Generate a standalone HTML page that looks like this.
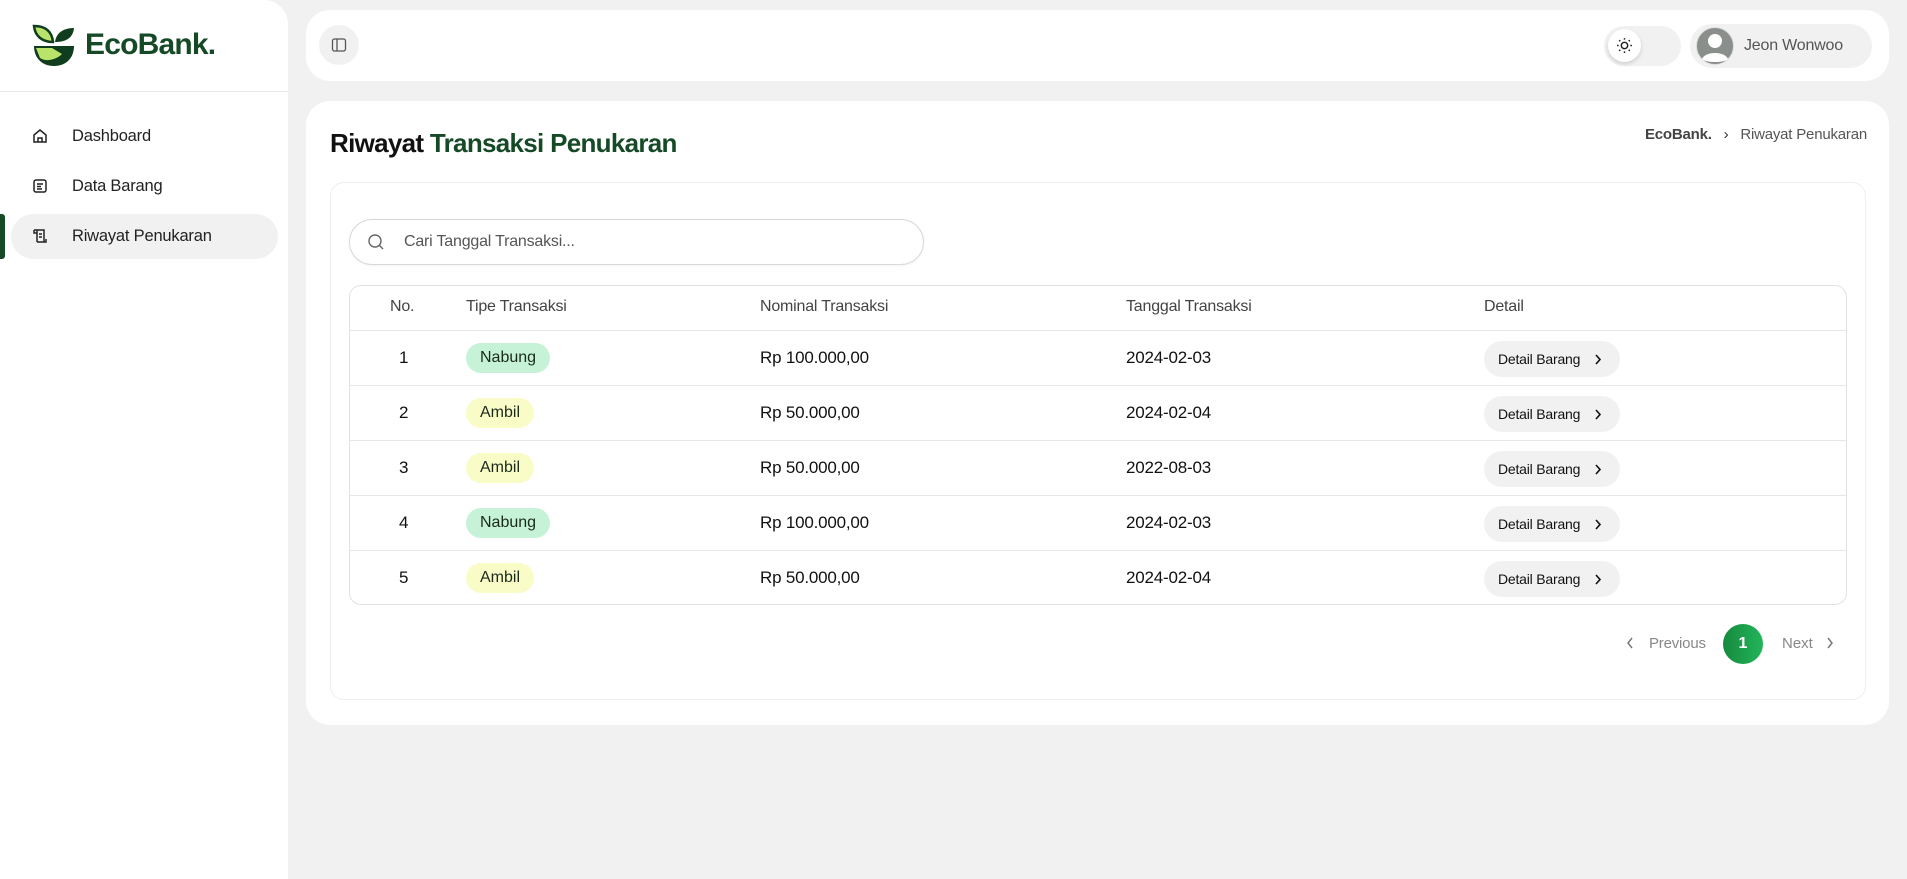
<!DOCTYPE html>
<html><head><meta charset="utf-8"><style>
*{box-sizing:border-box;margin:0;padding:0}
body{width:1907px;height:879px;background:#f1f1f1;font-family:"Liberation Sans",sans-serif;position:relative;overflow:hidden;color:#111}
.abs{position:absolute}
.side{left:0;top:0;width:288px;height:879px;background:#fff;border-radius:0 24px 0 0}
.logo-t{left:85px;top:28px;font-size:30px;font-weight:bold;color:#164a26;letter-spacing:-0.8px}
.div{left:0;top:91px;width:288px;height:1px;background:#e6e6e6}
.nav{left:72px;font-size:16.5px;color:#222;letter-spacing:-0.2px}
.card{background:#fff;border-radius:24px}
.th{top:298px;font-size:16px;color:#444;letter-spacing:-0.2px}
.row{left:349px;width:1498px;height:55px;border-top:1px solid #e6e6e6}
.cell{position:absolute;top:17px;font-size:17px;color:#111;letter-spacing:-0.2px}
.badge{position:absolute;top:12px;height:30px;border-radius:15px;font-size:16px;padding:6px 14px;color:#1a2a1a}
.nab{background:#c6f3d7}.amb{background:#fafcc8}
.btn{position:absolute;left:1135px;top:10px;width:136px;height:36px;border-radius:18px;background:#f1f1f1;font-size:14px;padding:10px 0 0 14px;color:#111;letter-spacing:-0.2px}
.btn svg{position:absolute;right:18px;top:13px}
</style></head><body>
<div class="abs side"></div>
<svg class="abs" style="left:32px;top:24px" width="44" height="44" viewBox="0 0 44 44">
<path d="M2 2 C14 2 20 8 21 18 C10 18 3 12 2 2Z" fill="#b9e36a" stroke="#0f3d1e" stroke-width="2.5"/>
<path d="M42 4 C30 4 24 10 23 18 C34 18 41 14 42 4Z" fill="#0f3d1e"/>
<path d="M2 22 H42 C42 34 34 42 22 42 C10 42 2 34 2 22Z" fill="#0f3d1e"/>
<path d="M4 24 H20 L30 30 C24 36 14 38 8 34Z" fill="#b9e36a"/>
</svg>
<div class="abs logo-t">EcoBank.</div>
<div class="abs div"></div>
<svg class="abs" style="left:32px;top:128px" width="16" height="16" viewBox="0 0 16 16" fill="none" stroke="#222" stroke-width="1.5"><path d="M2 7 L8 2 L14 7 V14 H2Z"/><path d="M6 14 V10 H10 V14"/></svg>
<div class="abs nav" style="top:127px">Dashboard</div>
<svg class="abs" style="left:32px;top:178px" width="16" height="16" viewBox="0 0 16 16" fill="none" stroke="#222" stroke-width="1.5"><rect x="2" y="2" width="12" height="12" rx="2"/><path d="M5 6H11M5 8.5H9M5 11H10"/></svg>
<div class="abs nav" style="top:177px">Data Barang</div>
<div class="abs" style="left:11px;top:214px;width:267px;height:45px;border-radius:23px;background:#f1f1f1"></div>
<div class="abs" style="left:0;top:214px;width:5px;height:45px;background:#164a26;border-radius:0 3px 3px 0"></div>
<svg class="abs" style="left:32px;top:228px" width="16" height="16" viewBox="0 0 16 16" fill="none" stroke="#222" stroke-width="1.5"><path d="M2 2H12V14H5M2 2V5H5M5 2V14M7 6H10M7 9H10M5 14H14V11"/></svg>
<div class="abs nav" style="top:227px">Riwayat Penukaran</div>

<div class="abs card" style="left:306px;top:10px;width:1583px;height:71px"></div>
<div class="abs" style="left:319px;top:25px;width:40px;height:40px;border-radius:20px;background:#f1f1f1"></div>
<svg class="abs" style="left:331px;top:37px" width="16" height="16" viewBox="0 0 16 16" fill="none" stroke="#555" stroke-width="1.3"><rect x="1.5" y="2" width="13" height="12" rx="2"/><path d="M6 2V14"/></svg>
<div class="abs" style="left:1604px;top:26px;width:77px;height:40px;border-radius:20px;background:#f1f1f1"></div>
<div class="abs" style="left:1608px;top:29px;width:33px;height:33px;border-radius:17px;background:#fff;box-shadow:0 2px 4px rgba(0,0,0,.15)"></div>
<svg class="abs" style="left:1616px;top:37px" width="17" height="17" viewBox="0 0 16 16" fill="none" stroke="#222" stroke-width="1.4"><circle cx="8" cy="8" r="3"/><path d="M8 1V2.5M8 13.5V15M1 8H2.5M13.5 8H15M3 3L4 4M12 12L13 13M3 13L4 12M12 4L13 3"/></svg>
<div class="abs" style="left:1690px;top:24px;width:182px;height:44px;border-radius:22px;background:#f1f1f1"></div>
<svg class="abs" style="left:1696px;top:27px" width="38" height="38" viewBox="0 0 38 38"><circle cx="19" cy="19" r="18.5" fill="#8a8f8c" stroke="#ddd"/><circle cx="19" cy="14" r="7" fill="#fff"/><path d="M6 32 C9 24 29 24 32 32 C28 36 10 36 6 32Z" fill="#fff"/></svg>
<div class="abs" style="left:1744px;top:37px;font-size:16px;color:#555;letter-spacing:-0.2px">Jeon Wonwoo</div>

<div class="abs card" style="left:306px;top:101px;width:1583px;height:624px"></div>
<div class="abs" style="left:330px;top:128px;font-size:26px;font-weight:bold;letter-spacing:-0.7px">Riwayat <span style="color:#164a26">Transaksi Penukaran</span></div>
<div class="abs" style="right:40px;top:126px;font-size:15px;color:#555;letter-spacing:-0.2px"><b style="color:#444">EcoBank.</b> &nbsp;&nbsp;<span style="color:#333">›</span>&nbsp;&nbsp; Riwayat Penukaran</div>
<div class="abs" style="left:330px;top:182px;width:1536px;height:518px;border:1px solid #eee;border-radius:14px"></div>
<div class="abs" style="left:349px;top:219px;width:575px;height:46px;border:1px solid #d8d8d8;border-radius:23px;box-shadow:0 1px 2px rgba(0,0,0,.05)"></div>
<svg class="abs" style="left:367px;top:233px" width="18" height="18" viewBox="0 0 18 18" fill="none" stroke="#666" stroke-width="1.4"><circle cx="8" cy="8" r="6"/><path d="M12.5 12.5L16 16"/></svg>
<div class="abs" style="left:404px;top:233px;font-size:16px;color:#555;letter-spacing:-0.2px">Cari Tanggal Transaksi...</div>

<div class="abs" style="left:349px;top:285px;width:1498px;height:320px;border:1px solid #e2e2e2;border-radius:12px"></div>
<div class="abs th" style="left:390px">No.</div>
<div class="abs th" style="left:466px">Tipe Transaksi</div>
<div class="abs th" style="left:760px">Nominal Transaksi</div>
<div class="abs th" style="left:1126px">Tanggal Transaksi</div>
<div class="abs th" style="left:1484px">Detail</div>

<div class="abs row" style="top:330px"><div class="cell" style="left:50px">1</div><div class="badge nab" style="left:117px">Nabung</div><div class="cell" style="left:411px">Rp 100.000,00</div><div class="cell" style="left:777px">2024-02-03</div><div class="btn">Detail Barang<svg width="8" height="11" viewBox="0 0 8 11" fill="none" stroke="#111" stroke-width="1.6"><path d="M2 1L6 5.5L2 10"/></svg></div></div>
<div class="abs row" style="top:385px"><div class="cell" style="left:50px">2</div><div class="badge amb" style="left:117px">Ambil</div><div class="cell" style="left:411px">Rp 50.000,00</div><div class="cell" style="left:777px">2024-02-04</div><div class="btn">Detail Barang<svg width="8" height="11" viewBox="0 0 8 11" fill="none" stroke="#111" stroke-width="1.6"><path d="M2 1L6 5.5L2 10"/></svg></div></div>
<div class="abs row" style="top:440px"><div class="cell" style="left:50px">3</div><div class="badge amb" style="left:117px">Ambil</div><div class="cell" style="left:411px">Rp 50.000,00</div><div class="cell" style="left:777px">2022-08-03</div><div class="btn">Detail Barang<svg width="8" height="11" viewBox="0 0 8 11" fill="none" stroke="#111" stroke-width="1.6"><path d="M2 1L6 5.5L2 10"/></svg></div></div>
<div class="abs row" style="top:495px"><div class="cell" style="left:50px">4</div><div class="badge nab" style="left:117px">Nabung</div><div class="cell" style="left:411px">Rp 100.000,00</div><div class="cell" style="left:777px">2024-02-03</div><div class="btn">Detail Barang<svg width="8" height="11" viewBox="0 0 8 11" fill="none" stroke="#111" stroke-width="1.6"><path d="M2 1L6 5.5L2 10"/></svg></div></div>
<div class="abs row" style="top:550px"><div class="cell" style="left:50px">5</div><div class="badge amb" style="left:117px">Ambil</div><div class="cell" style="left:411px">Rp 50.000,00</div><div class="cell" style="left:777px">2024-02-04</div><div class="btn">Detail Barang<svg width="8" height="11" viewBox="0 0 8 11" fill="none" stroke="#111" stroke-width="1.6"><path d="M2 1L6 5.5L2 10"/></svg></div></div>

<svg class="abs" style="left:1626px;top:637px" width="8" height="12" viewBox="0 0 8 12" fill="none" stroke="#777" stroke-width="1.5"><path d="M6 1L2 6L6 11"/></svg>
<div class="abs" style="left:1649px;top:635px;font-size:15px;color:#888;letter-spacing:-0.2px">Previous</div>
<div class="abs" style="left:1723px;top:624px;width:40px;height:40px;border-radius:20px;background:linear-gradient(90deg,#168a3e,#22b55a);color:#fff;font-weight:bold;font-size:16px;text-align:center;line-height:40px">1</div>
<div class="abs" style="left:1782px;top:635px;font-size:15px;color:#888">Next</div>
<svg class="abs" style="left:1826px;top:637px" width="8" height="12" viewBox="0 0 8 12" fill="none" stroke="#777" stroke-width="1.5"><path d="M2 1L6 6L2 11"/></svg>
</body></html>
